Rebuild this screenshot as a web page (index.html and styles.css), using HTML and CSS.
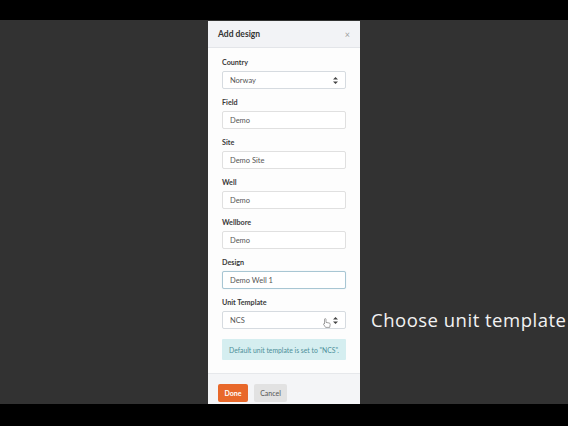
FILE: index.html
```html
<!DOCTYPE html>
<html lang="en">
<head>
    <meta charset="UTF-8">
    <title>Add design</title>
    <link rel="stylesheet" href="styles.css">
</head>
<body>
    <div class="bar"></div>

    <div class="stage">
        <!-- Add design dialog -->
        <div class="modal">
            <div class="modal-header">
                <span class="modal-title">Add design</span>
                <span class="close">×</span>
            </div>

            <div class="modal-body">
                <div class="group">
                    <label>Country</label>
                    <div class="field select">Norway
                        <svg class="arrows" width="5" height="7" viewBox="0 0 5 7"><path d="M2.5 0 L5 2.6 H0 Z M2.5 7 L5 4.4 H0 Z" fill="#444"/></svg>
                    </div>
                </div>
                <div class="group">
                    <label>Field</label>
                    <div class="field">Demo</div>
                </div>
                <div class="group">
                    <label>Site</label>
                    <div class="field">Demo Site</div>
                </div>
                <div class="group">
                    <label>Well</label>
                    <div class="field">Demo</div>
                </div>
                <div class="group">
                    <label>Wellbore</label>
                    <div class="field">Demo</div>
                </div>
                <div class="group">
                    <label>Design</label>
                    <div class="field focused">Demo Well 1</div>
                </div>
                <div class="group">
                    <label>Unit Template</label>
                    <div class="field select">NCS
                        <!-- mouse pointer hovering the select -->
                        <svg class="pointer" width="8" height="10" viewBox="0 0 8 10">
                            <path d="M2.2 0.6 C2.8 0.6 3 1 3 1.5 V4.4 L6.2 5 C7 5.2 7.3 5.7 7.2 6.4 L6.7 9.4 H2.6 L0.7 6.6 C0.4 6.1 0.7 5.6 1.2 5.7 L1.5 6 V1.5 C1.5 1 1.7 0.6 2.2 0.6 Z" fill="#fff" stroke="#666" stroke-width="0.6"/>
                        </svg>
                        <svg class="arrows" width="5" height="7" viewBox="0 0 5 7"><path d="M2.5 0 L5 2.6 H0 Z M2.5 7 L5 4.4 H0 Z" fill="#444"/></svg>
                    </div>
                </div>
                <div class="alert">Default unit template is set to "NCS".</div>
            </div>

            <div class="modal-footer">
                <button class="btn btn-done">Done</button>
                <button class="btn btn-cancel">Cancel</button>
            </div>
        </div>

        <div class="caption">Choose unit template</div>
    </div>

    <div class="bar bottom"></div>
</body>
</html>
```

FILE: styles.css
```css
body {
    margin: 0;
    width: 568px;
    height: 426px;
    overflow: hidden;
    background-color: #000;
    font-family: Lato, "Open Sans", sans-serif;
}

.bar {
    height: 20px;
    background-color: #000;
}

.bar.bottom {
    height: 22px;
}

/* Video area */
.stage {
    position: relative;
    height: 384px;
    background-color: #323232;
    display: flex;
    justify-content: center;
    overflow: hidden;
}

.caption {
    position: absolute;
    left: 371px;
    top: 287px;
    color: #f2f2f2;
    font-family: "Open Sans", sans-serif;
    font-size: 18.5px;
    white-space: nowrap;
    letter-spacing: 0.5px;
}

/* Dialog - its footer runs under the bottom bar */
.modal {
    width: 152px;
    margin-top: 1px;
    background-color: #fff;
    display: flex;
    flex-direction: column;
    overflow: hidden;
}

.modal-header {
    flex-shrink: 0;
    height: 26px;
    padding: 0 10px;
    background-color: #f2f3f6;
    border-bottom: 1px solid #e3e5e9;
    display: flex;
    align-items: center;
    justify-content: space-between;
}

.modal-title {
    font-size: 8.5px;
    font-weight: bold;
    color: #333;
}

.close {
    font-size: 9px;
    color: #a0a0a0;
}

.modal-body {
    flex-shrink: 0;
    padding: 11px 14px 13px;
    display: flex;
    flex-direction: column;
    gap: 10px;
    background-color: #fdfdfd;
}

.group {
    display: flex;
    flex-direction: column;
    gap: 4px;
}

.group label {
    font-size: 7.2px;
    font-weight: bold;
    color: #3a3a3a;
    line-height: 8px;
}

.field {
    height: 16px;
    padding: 0 7px;
    border: 1px solid #e0e0e0;
    border-radius: 2px;
    background-color: #fff;
    display: flex;
    align-items: center;
    font-size: 7.5px;
    color: #555;
}

.field.focused {
    border-color: #a8c6d3;
    box-shadow: 0 0 1px #c8dce5;
}

.field.select {
    position: relative;
    border-color: #d6dbe0;
}

.arrows {
    margin-left: auto;
}

.pointer {
    position: absolute;
    left: 100px;
    top: 6px;
}

.alert {
    height: 21px;
    background-color: #d5eef0;
    color: #4d8f99;
    font-size: 6.8px;
    display: flex;
    align-items: center;
    justify-content: center;
    border-radius: 1px;
}

.modal-footer {
    flex-shrink: 0;
    padding: 10px 10px 9px;
    background-color: #f4f5f7;
    border-top: 1px solid #e6e8eb;
    display: flex;
    align-items: flex-start;
    gap: 6px;
}

.btn {
    height: 18px;
    border: none;
    border-radius: 2px;
    font-family: Lato, sans-serif;
    font-size: 7px;
    padding: 0;
    cursor: pointer;
}

.btn-done {
    width: 30px;
    background-color: #e8682a;
    color: #fff;
    font-weight: bold;
}

.btn-cancel {
    width: 33px;
    background-color: #e2e2e2;
    color: #555;
}
```
